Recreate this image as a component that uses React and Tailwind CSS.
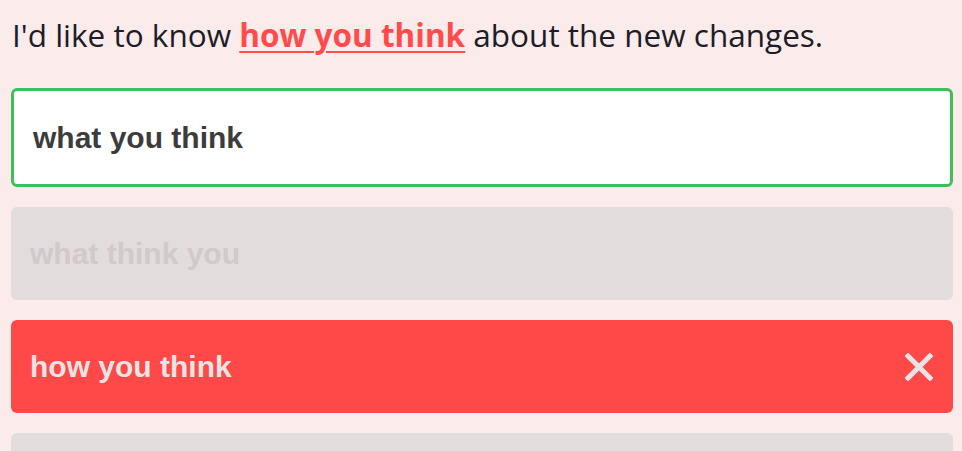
const options = [
  { text: 'what you think', state: 'selected' },
  { text: 'what think you', state: 'disabled' },
  { text: 'how you think', state: 'wrong' },
  { text: 'how think you', state: 'disabled' },
];

function Cross() {
  return (
    <svg width="28" height="28" viewBox="0 0 28 28" className="text-[#ebe4e4]">
      <path d="M3 3L25 25M25 3L3 25" stroke="currentColor" strokeWidth="5" strokeLinecap="square" />
    </svg>
  );
}

function Option({ text, state }) {
  if (state === 'selected') {
    return (
      <div className="flex items-center h-[99px] rounded-[6px] border-[3px] border-[#3fbf5c] bg-white pl-[19px]">
        <span className="text-[30px] font-bold text-[#3c3c3c]">{text}</span>
      </div>
    );
  }
  if (state === 'wrong') {
    return (
      <div className="flex items-center justify-between h-[93px] rounded-[6px] bg-[#ff4848] pl-[19px] pr-[20px]">
        <span className="text-[30px] font-bold text-[#ebe4e4]">{text}</span>
        <Cross />
      </div>
    );
  }
  return (
    <div className="flex items-center h-[93px] rounded-[6px] bg-[#e3dcdc] pl-[19px]">
      <span className="text-[30px] font-bold text-[#d1c9ca]">{text}</span>
    </div>
  );
}

export default function App() {
  return (
    <div className="min-h-screen bg-[#fcebeb] pl-[11px] pr-[9px] pt-[11px] font-['Liberation_Sans',Arial,sans-serif]">
      <p className="text-[31.5px] leading-[48px] text-[#1d1d28] font-['Open_Sans',sans-serif] pl-px">
        I'd like to know{' '}
        <span className="font-bold text-[#ff4b4b] underline decoration-2 underline-offset-4">how you think</span>{' '}
        about the new changes.
      </p>
      <div className="mt-[29px] flex flex-col gap-[20px]">
        {options.map((o) => (
          <Option key={o.text} {...o} />
        ))}
      </div>
    </div>
  );
}
